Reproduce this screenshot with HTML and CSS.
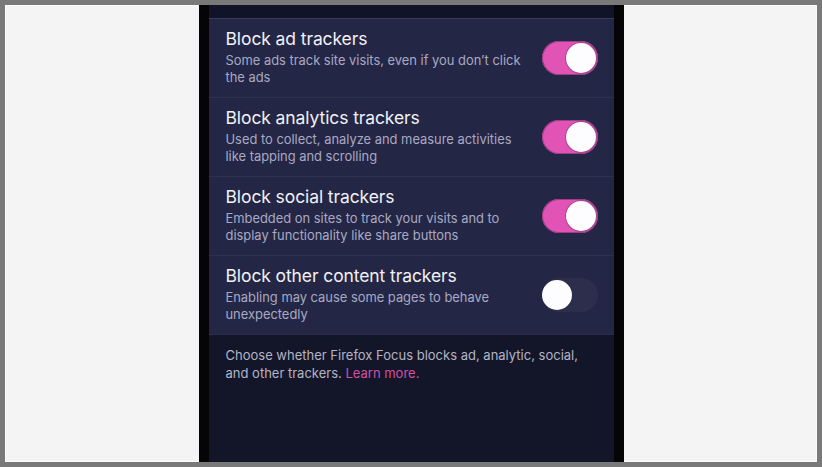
FILE: index.html
```html
<!DOCTYPE html>
<html>
<head>
<meta charset="utf-8">
<link rel="stylesheet" href="styles.css">
</head>
<body>
<div class="frame">
  <div class="canvas">
    <div class="phone">
      <div class="screen">
        <div class="topbar"></div>
        <div class="list">
          <div class="row">
            <div class="text">
              <div class="title">Block ad trackers</div>
              <div class="sub">Some ads track site visits, even if you don’t click the ads</div>
            </div>
            <div class="toggle on"><span class="knob"></span></div>
          </div>
          <div class="row">
            <div class="text">
              <div class="title">Block analytics trackers</div>
              <div class="sub">Used to collect, analyze and measure activities like tapping and scrolling</div>
            </div>
            <div class="toggle on"><span class="knob"></span></div>
          </div>
          <div class="row">
            <div class="text">
              <div class="title">Block social trackers</div>
              <div class="sub">Embedded on sites to track your visits and to display functionality like share buttons</div>
            </div>
            <div class="toggle on"><span class="knob"></span></div>
          </div>
          <div class="row">
            <div class="text">
              <div class="title">Block other content trackers</div>
              <div class="sub">Enabling may cause some pages to behave unexpectedly</div>
            </div>
            <div class="toggle off"><span class="knob"></span></div>
          </div>
        </div>
        <div class="footer"><p class="note">Choose whether Firefox Focus blocks ad, analytic, social, and other trackers. <span class="link">Learn more.</span></p></div>
      </div>
    </div>
  </div>
</div>
</body>
</html>
```

FILE: styles.css
```css
* { box-sizing: border-box; }
html, body { margin: 0; padding: 0; }
body {
  width: 822px;
  height: 467px;
  background: #797979;
  font-family: Inter, "Open Sans", sans-serif;
  overflow: hidden;
}
.frame {
  height: 467px;
  padding: 5px;
}
.canvas {
  height: 457px;
  background: #f4f4f4;
  border: 1px solid #fbfbfb;
  display: flex;
  justify-content: center;
}
.phone {
  width: 425px;
  background: #050508;
  padding: 0 10px;
  margin-top: -1px;
  margin-bottom: -1px;
}
.screen {
  height: 100%;
  display: flex;
  flex-direction: column;
  background: #12152a;
}
.topbar {
  height: 14px;
  background: #111429;
  border-bottom: 1px solid #3b3d5e;
}
.list { background: #242645; }
.row {
  height: 79px;
  display: flex;
  align-items: center;
  padding: 0 16px 0 17px;
  border-bottom: 1px solid #2e3050;
}
.row:last-child { border-bottom: 1px solid #2a2c4a; }
.text { flex: 1; padding-right: 20px; padding-bottom: 2px; }
.title {
  color: #f1f1f6;
  font-size: 17.5px;
  line-height: 22px;
  letter-spacing: -0.1px;
}
.sub {
  color: #a8a9c3;
  font-size: 12.9px;
  line-height: 17px;
  margin-top: 2px;
}
.toggle {
  position: relative;
  width: 56px;
  height: 34px;
  border-radius: 17px;
  flex: none;
}
.toggle.on {
  background: #e153b5;
  box-shadow: inset 0 0 0 1px #9b3f86;
}
.toggle.off {
  background: #2c2e4b;
}
.knob {
  position: absolute;
  top: 2px;
  width: 30px;
  height: 30px;
  border-radius: 50%;
  background: #fdfcff;
}
.toggle.on .knob { right: 2px; box-shadow: 0 0 0 1px #a8458f; }
.toggle.off .knob { left: 0px; }
.footer {
  flex: 1;
  background: #131628;
  padding: 11px 26px 0 17px;
}
.note {
  margin: 0;
  color: #b3b4c6;
  font-size: 13px;
  line-height: 18px;
}
.link { color: #d34ea9; }
```
